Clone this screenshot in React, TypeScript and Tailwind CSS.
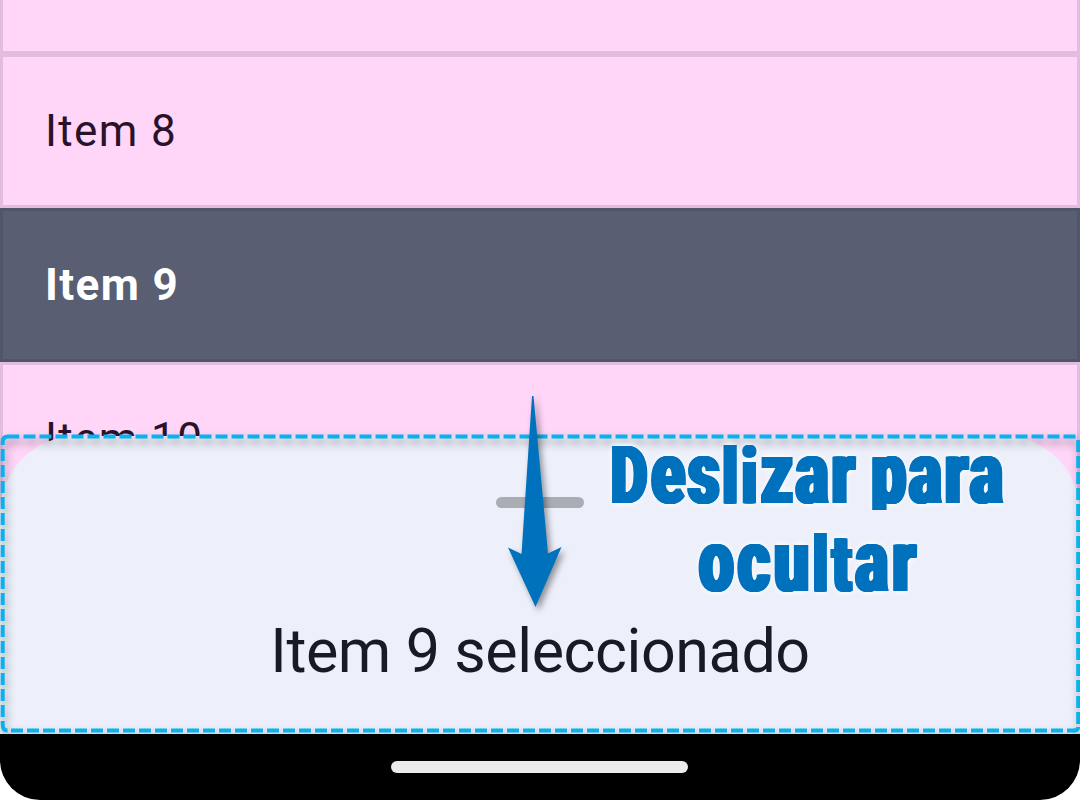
function Row({ label, selected = false }: { label: string; selected?: boolean }) {
  return (
    <div
      className={
        selected
          ? "flex h-[154px] shrink-0 items-center border-[3px] border-[#50566a] bg-[#595e72] px-[42px] text-[44px] font-bold tracking-[1.375px] text-white"
          : "flex h-[154px] shrink-0 items-center border-[3px] border-[#e2bddf] bg-[#ffd5f8] px-[42px] text-[44px] tracking-[1.375px] text-[#2b122b]"
      }
    >
      {label}
    </div>
  );
}

function Outline() {
  return (
    <svg className="absolute inset-0 drop-shadow-[2px_5px_4px_rgba(0,0,0,0.4)]" width="1080" height="300" viewBox="0 434 1080 300" fill="none" stroke="#08b1ef" strokeWidth="4">
      <path d="M2.7 445 V442 Q2.7 436.5 8 436.5 H19.3" />
      <path d="M23.5 436.5 H1077" strokeDasharray="12 4" />
      <path d="M2.7 449 V717" strokeDasharray="12 4" />
      <path d="M2.7 721 V725 Q2.7 730.5 7.5 730.5" />
      <path d="M11 730.5 H1075" strokeDasharray="12 4" />
      <path d="M1078.2 440 V725" strokeDasharray="12 4" />
      <path d="M1074 730.5 Q1078 730.5 1078.2 727" />
    </svg>
  );
}

const hint =
  "h-[66px] origin-left scale-x-[0.7] whitespace-nowrap font-black leading-[66px] text-[#0071bc] [text-shadow:1px_0_#0071bc,-1px_0_#0071bc,2px_0_#0071bc,-2px_0_#0071bc,3px_0_#0071bc,-3px_0_#0071bc,0_0_8px_white,0_0_8px_white]";

export default function App() {
  return (
    <div className="h-[800px] w-[1080px] overflow-hidden bg-white font-['Roboto',sans-serif]">
      <main className="relative flex h-[734px] flex-col overflow-hidden bg-[#ffd5f8]">
        <div className="flex flex-col mt-[-100px]">
          <Row label="" />
          <Row label="Item 8" />
          <Row label="Item 9" selected />
          <Row label="Item 10" />
        </div>
        <section className="absolute inset-x-0 bottom-0 h-[298px] rounded-t-[77px] bg-[#edf0fa]">
          <div className="flex flex-col items-center pt-[61px]">
            <div className="h-[11px] w-[88px] rounded-full bg-[#abadb5]" />
            <h1 className="mt-[107px] text-[61px] leading-[72px] tracking-[-0.42px] whitespace-nowrap text-[#171b25]">Item 9 seleccionado</h1>
          </div>
        </section>
        <div className="pointer-events-none absolute inset-x-0 bottom-0 h-[300px]">
          <Outline />
        </div>
        <svg className="absolute left-[500px] top-[390px] drop-shadow-[3px_4px_3px_rgba(0,0,0,0.4)]" width="70" height="225" viewBox="500 390 70 225">
          <path d="M532 396 H533.5 L548 553.5 L561.5 547 L535.5 607 L508 547.5 L521.5 554 Z" fill="#0071bc" />
        </svg>
        <div className="absolute left-[611px] top-[440px] flex w-[400px] flex-col gap-[22px]">
          <div className="[clip-path:inset(-10px_-20px_-4px_-20px)]">
            <div className={`${hint} tracking-[4.3px] [word-spacing:-7px]`}>
              <span className="text-[80px] tracking-[6px]">D</span>
              <span className="text-[88px]">es</span>
              <span className="text-[78px] tracking-[6px]">li</span>
              <span className="text-[88px]">zar para</span>
            </div>
          </div>
          <div className="pl-[88px]">
            <div className={`${hint} tracking-[6px]`}>
              <span className="text-[88px]">ocu</span>
              <span className="text-[77px]">l</span>
              <span className="text-[80px]">t</span>
              <span className="text-[88px]">ar</span>
            </div>
          </div>
        </div>
      </main>
      <footer className="flex h-[66px] justify-center rounded-b-[40px] bg-black pr-px pt-[27px]">
        <div className="h-[12px] w-[297px] rounded-full bg-[#ebebeb]" />
      </footer>
    </div>
  );
}
